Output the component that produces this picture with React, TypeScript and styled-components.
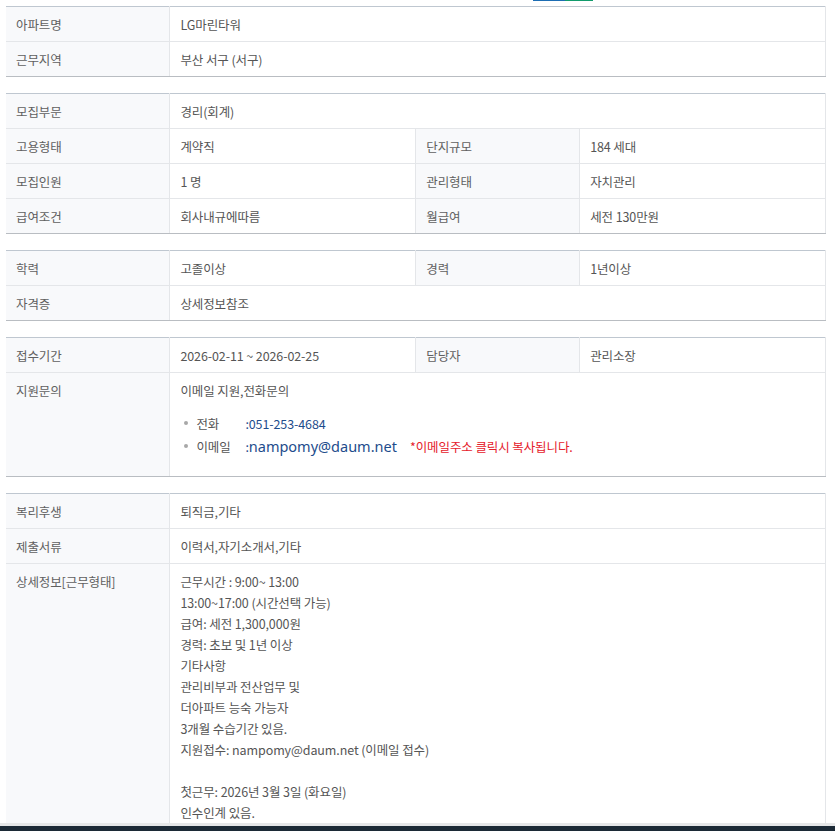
import React from "react";
import styled, { createGlobalStyle } from "styled-components";

const GlobalStyle = createGlobalStyle`
  html, body { margin: 0; padding: 0; background: #fff; }
  body {
    font-family: "Noto Sans CJK KR", "Noto Sans", sans-serif;
    font-size: 12.5px;
    color: #555;
  }
  * { box-sizing: border-box; }
`;

const Page = styled.div`
  padding: 0 9px 40px 6px;
`;

const TopStrip = styled.div`
  height: 6px;
  display: flex;
  align-items: flex-start;
  padding-left: 527px;
`;

const StubPart = styled.span<{ $color: string; $w: number }>`
  display: block;
  height: 1px;
  width: ${(p) => p.$w}px;
  background: ${(p) => p.$color};
`;

const Table = styled.table`
  width: 100%;
  border-collapse: collapse;
  table-layout: fixed;
  border-top: 1px solid #bfc7d0;
  margin-bottom: 16px;

  & tr:last-child > th,
  & tr:last-child > td {
    border-bottom-color: #b9bdc2;
  }
`;

const cellBase = `
  padding: 7px 10px 6px;
  line-height: 21px;
  border-bottom: 1px solid #e4e6e9;
  border-right: 1px solid #e4e6e9;
  letter-spacing: -0.1px;
  text-align: left;
  font-weight: 400;
  font-size: 12.5px;
`;

const Label = styled.th<{ $top?: boolean }>`
  ${cellBase}
  background: #f8f9fb;
  color: #606060;
  vertical-align: ${(p) => (p.$top ? "top" : "middle")};
`;

const Value = styled.td<{ $top?: boolean }>`
  ${cellBase}
  background: #fff;
  color: #555;
  vertical-align: ${(p) => (p.$top ? "top" : "middle")};
`;

const Intro = styled.div`
  line-height: 21px;
`;

const ContactList = styled.ul`
  list-style: none;
  margin: 11px 0 12px;
  padding: 0;
`;

const ContactItem = styled.li`
  position: relative;
  line-height: 23px;
  padding-left: 16px;
  display: flex;
  align-items: baseline;

  &::before {
    content: "";
    position: absolute;
    left: 4px;
    top: 9px;
    width: 4px;
    height: 4px;
    border-radius: 50%;
    background: #a8a8a8;
  }
`;

const ContactLabel = styled.span`
  display: inline-block;
  width: 49px;
  color: #555;
`;

const Phone = styled.span`
  color: #1d4c8c;
  font-size: 12.5px;
  letter-spacing: -0.1px;
`;

const Email = styled.span`
  color: #1d4c8c;
  font-family: "Noto Sans", sans-serif;
  font-size: 14.5px;
  letter-spacing: 0;
  cursor: pointer;
`;

const Note = styled.span`
  color: #e5202b;
  margin-left: 13px;
  font-size: 12.5px;
`;

const Detail = styled.div`
  line-height: 21px;
  white-space: pre-line;
`;

const BottomBar = styled.div`
  position: fixed;
  left: 0;
  right: 0;
  bottom: 0;
  height: 8px;
  background: #1c2a36;
  border-top: 3px solid #e6e7e8;
`;

const Cols = () => (
  <colgroup>
    <col style={{ width: "20%" }} />
    <col style={{ width: "30%" }} />
    <col style={{ width: "20%" }} />
    <col style={{ width: "30%" }} />
  </colgroup>
);

const detailText = `근무시간 : 9:00~ 13:00
13:00~17:00 (시간선택 가능)
급여: 세전 1,300,000원
경력: 초보 및 1년 이상
기타사항
관리비부과 전산업무 및
더아파트 능숙 가능자
3개월 수습기간 있음.
지원접수: nampomy@daum.net (이메일 접수)

첫근무: 2026년 3월 3일 (화요일)
인수인계 있음.`;

export default function App() {
  return (
    <>
      <GlobalStyle />
      <Page>
        <TopStrip>
          <StubPart $color="#1d6db3" $w={32} />
          <StubPart $color="#129b6c" $w={28} />
        </TopStrip>

        <Table>
          <Cols />
          <tbody>
            <tr>
              <Label>아파트명</Label>
              <Value colSpan={3}>LG마린타워</Value>
            </tr>
            <tr>
              <Label>근무지역</Label>
              <Value colSpan={3}>부산 서구 (서구)</Value>
            </tr>
          </tbody>
        </Table>

        <Table>
          <Cols />
          <tbody>
            <tr>
              <Label>모집부문</Label>
              <Value colSpan={3}>경리(회계)</Value>
            </tr>
            <tr>
              <Label>고용형태</Label>
              <Value>계약직</Value>
              <Label>단지규모</Label>
              <Value>184 세대</Value>
            </tr>
            <tr>
              <Label>모집인원</Label>
              <Value>1 명</Value>
              <Label>관리형태</Label>
              <Value>자치관리</Value>
            </tr>
            <tr>
              <Label>급여조건</Label>
              <Value>회사내규에따름</Value>
              <Label>월급여</Label>
              <Value>세전 130만원</Value>
            </tr>
          </tbody>
        </Table>

        <Table>
          <Cols />
          <tbody>
            <tr>
              <Label>학력</Label>
              <Value>고졸이상</Value>
              <Label>경력</Label>
              <Value>1년이상</Value>
            </tr>
            <tr>
              <Label>자격증</Label>
              <Value colSpan={3}>상세정보참조</Value>
            </tr>
          </tbody>
        </Table>

        <Table>
          <Cols />
          <tbody>
            <tr>
              <Label>접수기간</Label>
              <Value>2026-02-11 ~ 2026-02-25</Value>
              <Label>담당자</Label>
              <Value>관리소장</Value>
            </tr>
            <tr>
              <Label $top>지원문의</Label>
              <Value $top colSpan={3}>
                <Intro>이메일 지원,전화문의</Intro>
                <ContactList>
                  <ContactItem>
                    <ContactLabel>전화</ContactLabel>
                    <Phone>:051-253-4684</Phone>
                  </ContactItem>
                  <ContactItem>
                    <ContactLabel>이메일</ContactLabel>
                    <Phone>:</Phone>
                    <Email>nampomy@daum.net</Email>
                    <Note>*이메일주소 클릭시 복사됩니다.</Note>
                  </ContactItem>
                </ContactList>
              </Value>
            </tr>
          </tbody>
        </Table>

        <Table>
          <Cols />
          <tbody>
            <tr>
              <Label>복리후생</Label>
              <Value colSpan={3}>퇴직금,기타</Value>
            </tr>
            <tr>
              <Label>제출서류</Label>
              <Value colSpan={3}>이력서,자기소개서,기타</Value>
            </tr>
            <tr>
              <Label $top>상세정보[근무형태]</Label>
              <Value $top colSpan={3}>
                <Detail>{detailText}</Detail>
              </Value>
            </tr>
          </tbody>
        </Table>
      </Page>
      <BottomBar />
    </>
  );
}
